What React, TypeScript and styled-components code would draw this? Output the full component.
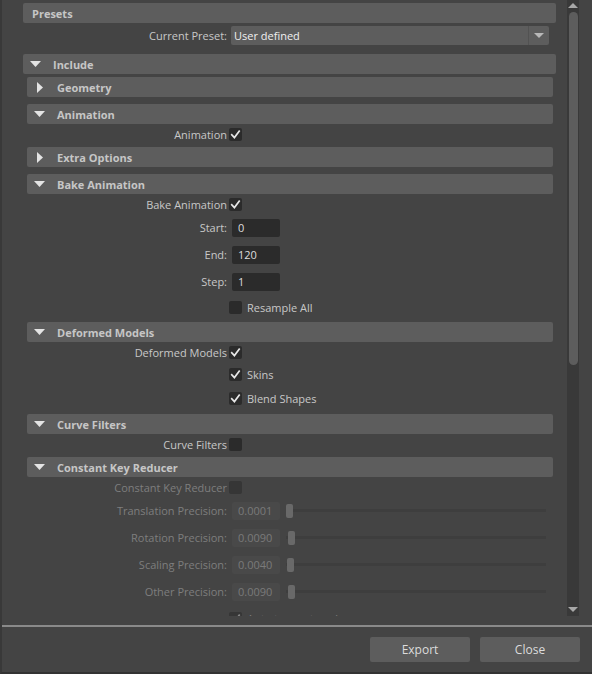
import React from "react";
import styled, { createGlobalStyle } from "styled-components";

const GlobalStyle = createGlobalStyle`
  html, body {
    margin: 0;
    padding: 0;
    background: #444444;
  }
  body {
    font-family: "Open Sans", "Liberation Sans", sans-serif;
    font-size: 11px;
    color: #c8c8c8;
  }
`;

const TriangleDown = () => (
  <svg width="11" height="6" viewBox="0 0 11 6">
    <polygon points="0,0 11,0 5.5,6" fill="#e4e4e4" />
  </svg>
);

const TriangleRight = () => (
  <svg width="6" height="11" viewBox="0 0 6 11">
    <polygon points="0,0 6,5.5 0,11" fill="#e4e4e4" />
  </svg>
);

const CheckMark = ({ color }: { color: string }) => (
  <svg width="13" height="13" viewBox="0 0 13 13">
    <path
      d="M2.8 6.8 L5.4 9.6 L10.2 3.2"
      fill="none"
      stroke={color}
      strokeWidth="1.7"
      strokeLinecap="square"
    />
  </svg>
);

const Frame = ({
  title,
  open,
  nested,
  plain,
  children
}: {
  title: string;
  open?: boolean;
  nested?: boolean;
  plain?: boolean;
  children?: React.ReactNode;
}) => (
  <FrameBox $nested={nested} $collapsed={!open}>
    <Header>
      {!plain && <Toggle>{open ? <TriangleDown /> : <TriangleRight />}</Toggle>}
      <HeaderTitle $plain={plain}>{title}</HeaderTitle>
    </Header>
    {open && children}
  </FrameBox>
);

const CheckBox = ({ checked, disabled }: { checked?: boolean; disabled?: boolean }) => (
  <Box $disabled={disabled}>
    {checked && <CheckMark color={disabled ? "#8a8a8a" : "#e8e8e8"} />}
  </Box>
);

const CheckRow = ({
  label,
  text,
  checked,
  disabled,
  h,
  w = 200
}: {
  label?: string;
  text?: string;
  checked?: boolean;
  disabled?: boolean;
  h: number;
  w?: number;
}) => (
  <Row $h={h} $label={w}>
    <Label $disabled={disabled}>{label}</Label>
    <CheckCell>
      <CheckBox checked={checked} disabled={disabled} />
      {text && <CheckText $disabled={disabled}>{text}</CheckText>}
    </CheckCell>
  </Row>
);

const PrecisionRow = ({ label, value, pos }: { label: string; value: string; pos: number }) => (
  <Row $h={27} $label={200}>
    <Label $disabled>{label}</Label>
    <SliderCell>
      <Field $disabled>{value}</Field>
      <Slider>
        <Track />
        <Handle style={{ left: pos }} />
      </Slider>
    </SliderCell>
  </Row>
);

export default function App() {
  return (
    <>
      <GlobalStyle />
      <Dialog>
        <ScrollBody>
          <Content>
            <FrameList>
              <Frame title="Presets" open plain>
                <PresetBody>
                  <Row $h={25} $label={204}>
                    <Label>Current Preset:</Label>
                    <Dropdown>
                      <DropdownText>User defined</DropdownText>
                      <DropdownArrow>
                        <svg width="10" height="5" viewBox="0 0 10 5">
                          <polygon points="0,0 10,0 5,5" fill="#b8b8b8" />
                        </svg>
                      </DropdownArrow>
                    </Dropdown>
                  </Row>
                </PresetBody>
              </Frame>

              <Frame title="Include" open>
                <NestedList>
                  <Frame title="Geometry" nested />

                  <Frame title="Animation" open nested>
                    <CheckRow label="Animation" checked h={20} />
                  </Frame>

                  <Frame title="Extra Options" nested />

                  <Frame title="Bake Animation" open nested>
                    <CheckRow label="Bake Animation" checked h={20} />
                    <Row $h={27} $label={200}>
                      <Label>Start:</Label>
                      <Field>0</Field>
                    </Row>
                    <Row $h={27} $label={200}>
                      <Label>End:</Label>
                      <Field>120</Field>
                    </Row>
                    <Row $h={27} $label={200}>
                      <Label>Step:</Label>
                      <Field>1</Field>
                    </Row>
                    <CheckRow text="Resample All" h={24} />
                  </Frame>

                  <Frame title="Deformed Models" open nested>
                    <CheckRow label="Deformed Models" checked h={20} />
                    <CheckRow text="Skins" checked h={24} />
                    <CheckRow text="Blend Shapes" checked h={25} />
                  </Frame>

                  <Frame title="Curve Filters" open nested>
                    <CheckRow label="Curve Filters" h={20} />
                  </Frame>

                  <Frame title="Constant Key Reducer" open nested>
                    <CheckRow label="Constant Key Reducer" disabled h={20} />
                    <PrecisionRow label="Translation Precision:" value="0.0001" pos={0} />
                    <PrecisionRow label="Rotation Precision:" value="0.0090" pos={2} />
                    <PrecisionRow label="Scaling Precision:" value="0.0040" pos={1} />
                    <PrecisionRow label="Other Precision:" value="0.0090" pos={2} />
                    <CheckRow text="Auto tangents only" checked disabled h={27} />
                  </Frame>
                </NestedList>
              </Frame>
            </FrameList>
          </Content>

          <ScrollTrack>
            <ScrollArrow>
              <svg width="10" height="5" viewBox="0 0 10 5">
                <polygon points="0,5 10,5 5,0" fill="#a8a8a8" />
              </svg>
            </ScrollArrow>
            <Thumb />
            <TrackSpace />
            <ScrollArrow $bottom>
              <svg width="10" height="5" viewBox="0 0 10 5">
                <polygon points="0,0 10,0 5,5" fill="#a8a8a8" />
              </svg>
            </ScrollArrow>
          </ScrollTrack>
        </ScrollBody>

        <Separator />

        <ButtonBar>
          <Button>Export</Button>
          <Button>Close</Button>
        </ButtonBar>
      </Dialog>
    </>
  );
}

const Dialog = styled.div`
  width: 592px;
  height: 674px;
  box-sizing: border-box;
  display: flex;
  flex-direction: column;
  background: #444444;
  border-left: 2px solid #393939;
  border-bottom: 2px solid #333333;
  overflow: hidden;
`;

const ScrollBody = styled.div`
  display: flex;
  height: 616px;
  flex: 0 0 616px;
  overflow: hidden;
`;

const Content = styled.div`
  flex: 1;
  padding: 3px 11px 0 21px;
  overflow: hidden;
`;

const FrameList = styled.div`
  display: flex;
  flex-direction: column;
  gap: 3px;
`;

const NestedList = styled(FrameList)`
  padding-top: 3px;
`;

const FrameBox = styled.section<{ $nested?: boolean; $collapsed?: boolean }>`
  margin: ${p => (p.$nested ? "0 3px 0 4px" : "0")};
  padding-bottom: ${p => (p.$collapsed ? 4 : 0)}px;
`;

const Header = styled.div`
  height: 20px;
  display: flex;
  align-items: center;
  background: #5d5d5d;
  border-radius: 2px;
  font-weight: bold;
  color: #c6c6c6;
`;

const Toggle = styled.div`
  width: 25px;
  height: 20px;
  display: flex;
  align-items: center;
  justify-content: center;
`;

const HeaderTitle = styled.span<{ $plain?: boolean }>`
  margin-left: ${p => (p.$plain ? 9 : 5)}px;
`;

const PresetBody = styled.div`
  padding-bottom: 3px;
`;

const Row = styled.div<{ $h: number; $label: number }>`
  display: grid;
  grid-template-columns: ${p => p.$label}px 1fr;
  align-items: center;
  height: ${p => p.$h}px;
`;

const Label = styled.span<{ $disabled?: boolean }>`
  text-align: right;
  white-space: nowrap;
  color: ${p => (p.$disabled ? "#7e7e7e" : "#c8c8c8")};
`;

const CheckCell = styled.div`
  display: flex;
  align-items: center;
  padding-left: 2px;
`;

const Box = styled.div<{ $disabled?: boolean }>`
  width: 13px;
  height: 13px;
  border-radius: 2px;
  background: ${p => (p.$disabled ? "#363636" : "#2b2b2b")};
`;

const CheckText = styled.span<{ $disabled?: boolean }>`
  margin-left: 5px;
  color: ${p => (p.$disabled ? "#7e7e7e" : "#c8c8c8")};
`;

const Field = styled.div<{ $disabled?: boolean }>`
  width: 48px;
  height: 18px;
  box-sizing: border-box;
  margin-left: 5px;
  padding-left: 6px;
  display: flex;
  align-items: center;
  border-radius: 2px;
  background: ${p => (p.$disabled ? "#494949" : "#2b2b2b")};
  color: ${p => (p.$disabled ? "#7a7a7a" : "#dddddd")};
`;

const SliderCell = styled.div`
  display: flex;
  align-items: center;
`;

const Slider = styled.div`
  position: relative;
  width: 260px;
  height: 14px;
  margin-left: 6px;
  display: flex;
  align-items: center;
`;

const Track = styled.div`
  width: 100%;
  height: 3px;
  background: #3e3e3e;
`;

const Handle = styled.div`
  position: absolute;
  top: 0;
  width: 7px;
  height: 14px;
  border-radius: 2px;
  background: #696969;
`;

const Dropdown = styled.div`
  width: 318px;
  height: 19px;
  margin-left: 4px;
  display: flex;
  align-items: center;
  border-radius: 2px;
  background: #5d5d5d;
`;

const DropdownText = styled.span`
  flex: 1;
  padding-left: 3px;
  color: #f0f0f0;
`;

const DropdownArrow = styled.div`
  width: 20px;
  height: 19px;
  display: flex;
  align-items: center;
  justify-content: center;
  border-left: 1px solid #525252;
`;

const ScrollTrack = styled.div`
  width: 12px;
  margin-right: 13px;
  display: flex;
  flex-direction: column;
  align-items: center;
  background: #393939;
`;

const ScrollArrow = styled.div<{ $bottom?: boolean }>`
  height: ${p => (p.$bottom ? 15 : 10)}px;
  display: flex;
  align-items: ${p => (p.$bottom ? "flex-start" : "center")};
  padding-top: ${p => (p.$bottom ? 6 : 0)}px;
  box-sizing: border-box;
`;

const Thumb = styled.div`
  width: 9px;
  height: 353px;
  margin-top: 2px;
  border-radius: 5px;
  background: #5d5d5d;
`;

const TrackSpace = styled.div`
  flex: 1;
`;

const Separator = styled.div`
  height: 2px;
  margin: 9px 0 0;
  background: #8a8a8a;
`;

const ButtonBar = styled.div`
  display: flex;
  justify-content: flex-end;
  gap: 10px;
  padding: 10px 12px 0 0;
`;

const Button = styled.button`
  width: 100px;
  height: 25px;
  border: none;
  border-radius: 2px;
  background: #5d5d5d;
  color: #dcdcdc;
  font-family: "Open Sans", "Liberation Sans", sans-serif;
  font-size: 12px;
  padding: 0;
`;
